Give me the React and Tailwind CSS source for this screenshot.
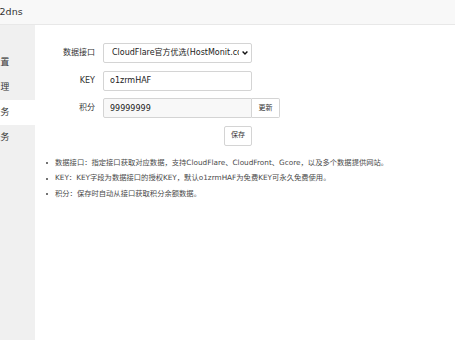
import React from 'react';

const font = { fontFamily: '"DejaVu Sans", "Noto Sans CJK SC", sans-serif' };

const menu = ['基本设置', '域名管理', '优选服务', '定时任务'];

const notes = [
  '数据接口：指定接口获取对应数据，支持CloudFlare、CloudFront、Gcore，以及多个数据提供网站。',
  'KEY：KEY字段为数据接口的授权KEY，默认o1zrmHAF为免费KEY可永久免费使用。',
  '积分：保存时自动从接口获取积分余额数据。',
];

function Field({ label, children }) {
  return (
    <div className="flex items-center h-[20px]">
      <label className="w-[50px] text-right text-[8px] leading-none text-[#333]">{label}</label>
      <div className="ml-[8px] flex">{children}</div>
    </div>
  );
}

export default function App() {
  return (
    <div className="w-[455px] h-[340px] overflow-hidden bg-white" style={font}>
      <div className="-ml-[40px] w-[495px] h-[340px] flex flex-col">
        <header className="h-[25px] shrink-0 flex items-center bg-[#f8f8f8] border-b border-[#e8e8e8] pl-[31px]">
          <span className="text-[9.5px] text-[#333]">cf2dns</span>
        </header>
        <div className="flex flex-1">
          <aside className="w-[75px] bg-[#f0f0f0] pt-[25px]">
            {menu.map((item, i) => (
              <div
                key={item}
                className={`h-[25px] flex items-center pl-[14px] text-[8.8px] text-[#333] ${i === 2 ? 'bg-white' : ''}`}
              >
                {item}
              </div>
            ))}
          </aside>
          <main className="flex-1 pt-[18px] pl-[10px]">
            <div className="flex flex-col gap-[7.5px]">
              <Field label="数据接口">
                <div className="relative">
                  <select className="block appearance-none w-[149px] h-[20px] border border-[#d4d4d4] rounded-[2px] bg-white pl-[8px] pr-[12px] text-[8px] text-[#222] outline-none">
                    <option>CloudFlare官方优选(HostMonit.com)</option>
                  </select>
                  <svg className="absolute right-[4px] top-[8px] w-[6px] h-[4px]" viewBox="0 0 6 4">
                    <path d="M0.6 0.6 L3 3 L5.4 0.6" fill="none" stroke="#111" strokeWidth="1.4" />
                  </svg>
                </div>
              </Field>
              <Field label="KEY">
                <input
                  readOnly
                  value="o1zrmHAF"
                  className="block w-[149px] h-[20px] border border-[#d4d4d4] rounded-[2px] bg-white px-[6px] text-[8px] text-[#222] outline-none"
                />
              </Field>
              <Field label="积分">
                <input
                  readOnly
                  value="99999999"
                  className="block w-[149px] h-[20px] border border-[#d4d4d4] rounded-l-[2px] bg-[#f8f8f8] px-[6px] text-[8px] text-[#222] outline-none"
                />
                <button className="w-[28px] h-[20px] border border-l-0 border-[#d4d4d4] rounded-r-[2px] bg-white text-[7px] text-[#333]">
                  更新
                </button>
              </Field>
              <div className="flex h-[20px]">
                <div className="ml-[58px] w-[149px] flex justify-end">
                  <button className="w-[28px] h-[20px] border border-[#d4d4d4] rounded-[2px] bg-white text-[7px] text-[#333]">
                    保存
                  </button>
                </div>
              </div>
            </div>
            <ul className="mt-[10px] pl-[1px] flex flex-col">
              {notes.map((n) => (
                <li key={n} className="flex items-center h-[15.5px] text-[7.3px] text-[#4a4a4a]">
                  <span className="w-[2px] h-[2px] rounded-full bg-[#444] mr-[7px] shrink-0" />
                  {n}
                </li>
              ))}
            </ul>
          </main>
        </div>
      </div>
    </div>
  );
}
